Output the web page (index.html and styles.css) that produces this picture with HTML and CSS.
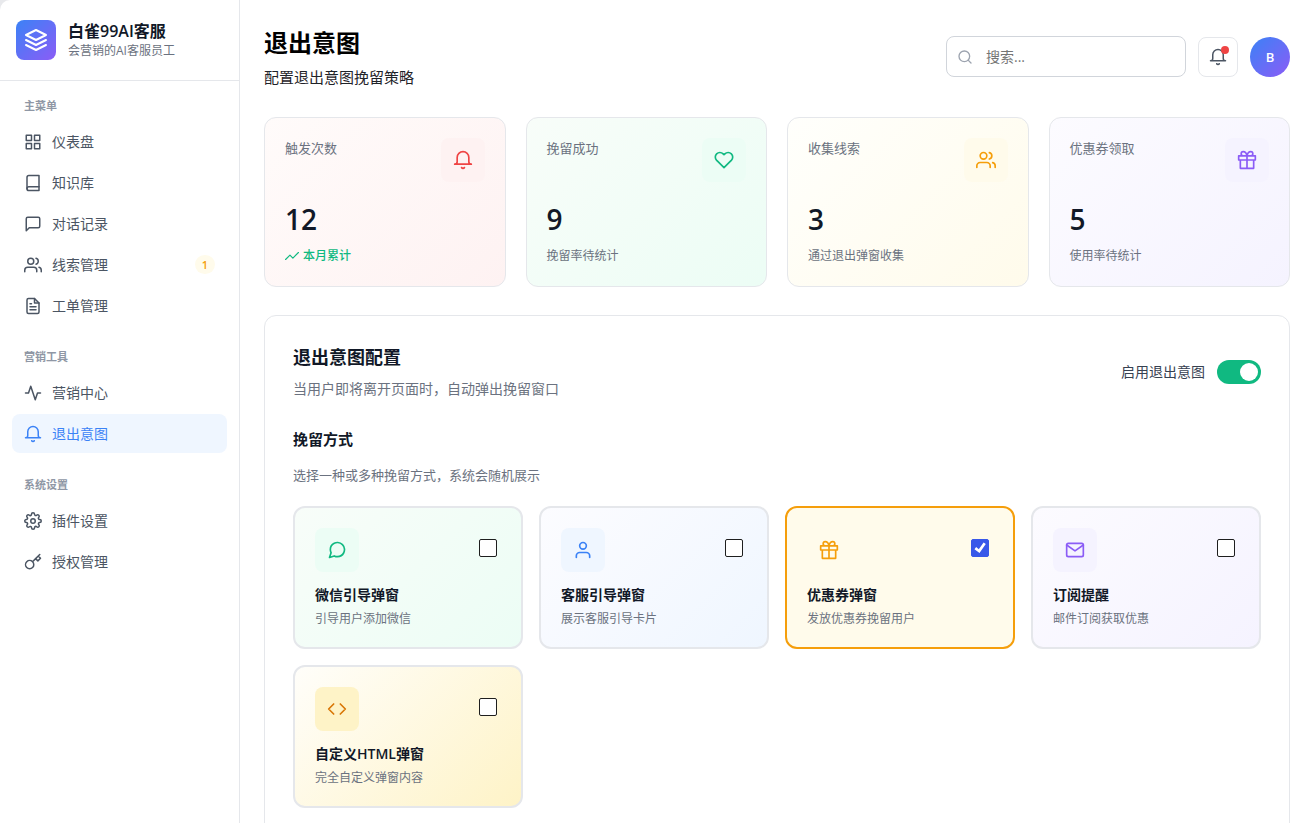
FILE: index.html
```html
<!DOCTYPE html>
<html lang="zh-CN">
<head>
<meta charset="utf-8">
<meta name="viewport" content="width=device-width, initial-scale=1">
<title>退出意图 - 白雀99AI客服</title>
<link rel="stylesheet" href="styles.css">
</head>
<body>
<svg class="sprite" aria-hidden="true">
  <symbol id="i-layers" viewBox="0 0 24 24"><path d="M12 2L2 7l10 5 10-5-10-5zM2 17l10 5 10-5M2 12l10 5 10-5"/></symbol>
  <symbol id="i-grid" viewBox="0 0 24 24"><rect x="3" y="3" width="7" height="7"/><rect x="14" y="3" width="7" height="7"/><rect x="14" y="14" width="7" height="7"/><rect x="3" y="14" width="7" height="7"/></symbol>
  <symbol id="i-book" viewBox="0 0 24 24"><path d="M4 19.500A2.500 2.500 0 0 1 6.500 17H20"/><path d="M6.500 2H20v20H6.500A2.500 2.500 0 0 1 4 19.500v-15A2.500 2.500 0 0 1 6.500 2z"/></symbol>
  <symbol id="i-message" viewBox="0 0 24 24"><path d="M21 15a2 2 0 0 1-2 2H7l-4 4V5a2 2 0 0 1 2-2h14a2 2 0 0 1 2 2z"/></symbol>
  <symbol id="i-users" viewBox="0 0 24 24"><path d="M17 21v-2a4 4 0 0 0-4-4H5a4 4 0 0 0-4 4v2"/><circle cx="9" cy="7" r="4"/><path d="M23 21v-2a4 4 0 0 0-3-3.870M16 3.130a4 4 0 0 1 0 7.750"/></symbol>
  <symbol id="i-file" viewBox="0 0 24 24"><path d="M14 2H6a2 2 0 0 0-2 2v16a2 2 0 0 0 2 2h12a2 2 0 0 0 2-2V8z"/><path d="M14 2v6h6M16 13H8M16 17H8M10 9H8"/></symbol>
  <symbol id="i-activity" viewBox="0 0 24 24"><path d="M22 12h-4l-3 9L9 3l-3 9H2"/></symbol>
  <symbol id="i-bell" viewBox="0 0 24 24"><path d="M22 17H2a3 3 0 0 0 3-3V9a7 7 0 0 1 14 0v5a3 3 0 0 0 3 3zM13.730 21a2 2 0 0 1-3.460 0"/></symbol>
  <symbol id="i-settings" viewBox="0 0 24 24"><circle cx="12" cy="12" r="3"/><path d="M19.400 15a1.650 1.650 0 0 0 .33 1.820l.06.06a2 2 0 0 1 0 2.830 2 2 0 0 1-2.830 0l-.06-.06a1.650 1.650 0 0 0-1.820-.33 1.650 1.650 0 0 0-1 1.510V21a2 2 0 0 1-2 2 2 2 0 0 1-2-2v-.09A1.650 1.650 0 0 0 9 19.400a1.650 1.650 0 0 0-1.820.33l-.06.06a2 2 0 0 1-2.830 0 2 2 0 0 1 0-2.830l.06-.06a1.650 1.650 0 0 0 .33-1.820 1.650 1.650 0 0 0-1.510-1H3a2 2 0 0 1-2-2 2 2 0 0 1 2-2h.09A1.650 1.650 0 0 0 4.600 9a1.650 1.650 0 0 0-.33-1.820l-.06-.06a2 2 0 0 1 0-2.830 2 2 0 0 1 2.830 0l.06.06a1.650 1.650 0 0 0 1.820.33H9a1.650 1.650 0 0 0 1-1.510V3a2 2 0 0 1 2-2 2 2 0 0 1 2 2v.09a1.650 1.650 0 0 0 1 1.510 1.650 1.650 0 0 0 1.820-.33l.06-.06a2 2 0 0 1 2.830 0 2 2 0 0 1 0 2.830l-.06.06a1.650 1.650 0 0 0-.33 1.820V9a1.650 1.650 0 0 0 1.510 1H21a2 2 0 0 1 2 2 2 2 0 0 1-2 2h-.09a1.650 1.650 0 0 0-1.510 1z"/></symbol>
  <symbol id="i-key" viewBox="0 0 24 24"><path d="M21 2l-2 2m-7.610 7.610a5.500 5.500 0 1 1-7.778 7.778 5.500 5.500 0 0 1 7.777-7.777zm0 0L15.500 7.500m0 0l3 3L22 7l-3-3m-3.500 3.500L19 4"/></symbol>
  <symbol id="i-search" viewBox="0 0 24 24"><circle cx="11" cy="11" r="8"/><path d="M21 21l-4.350-4.350"/></symbol>
  <symbol id="i-heart" viewBox="0 0 24 24"><path d="M20.840 4.610a5.500 5.500 0 0 0-7.780 0L12 5.670l-1.060-1.060a5.500 5.500 0 0 0-7.780 7.780l1.060 1.060L12 21.230l7.780-7.780 1.060-1.060a5.500 5.500 0 0 0 0-7.780z"/></symbol>
  <symbol id="i-gift" viewBox="0 0 24 24"><path d="M20 12v10H4V12M2 7h20v5H2zM12 22V7M12 7H7.500a2.500 2.500 0 0 1 0-5C11 2 12 7 12 7zM12 7h4.500a2.500 2.500 0 0 0 0-5C13 2 12 7 12 7z"/></symbol>
  <symbol id="i-trend" viewBox="0 0 24 24"><path d="M23 6l-9.500 9.500-5-5L1 18"/></symbol>
  <symbol id="i-chat" viewBox="0 0 24 24"><path d="M21 11.500a8.380 8.380 0 0 1-.9 3.800 8.500 8.500 0 0 1-7.600 4.700 8.380 8.380 0 0 1-3.800-.9L3 21l1.900-5.700a8.380 8.380 0 0 1-.9-3.800 8.500 8.500 0 0 1 4.700-7.600 8.380 8.380 0 0 1 3.800-.9h.5a8.480 8.480 0 0 1 8 8v.5z"/></symbol>
  <symbol id="i-user" viewBox="0 0 24 24"><path d="M20 21v-2a4 4 0 0 0-4-4H8a4 4 0 0 0-4 4v2"/><circle cx="12" cy="7" r="4"/></symbol>
  <symbol id="i-mail" viewBox="0 0 24 24"><path d="M4 4h16a2 2 0 0 1 2 2v12a2 2 0 0 1-2 2H4a2 2 0 0 1-2-2V6a2 2 0 0 1 2-2z"/><path d="M22 6l-10 7L2 6"/></symbol>
  <symbol id="i-code" viewBox="0 0 24 24"><path d="M16 18l6-6-6-6M8 6l-6 6 6 6"/></symbol>
</svg>

<div class="app">
  <aside class="sidebar">
    <div class="brand">
      <div class="brand-logo"><svg class="icon icon-lg"><use href="#i-layers"/></svg></div>
      <div>
        <div class="brand-name">白雀99AI客服</div>
        <div class="brand-tagline">会营销的AI客服员工</div>
      </div>
    </div>
    <nav class="nav">
      <section class="nav-section">
        <h2 class="nav-label">主菜单</h2>
        <div class="nav-list">
          <a class="nav-item" href="#dashboard"><svg class="icon icon-sm"><use href="#i-grid"/></svg>仪表盘</a>
          <a class="nav-item" href="#knowledge"><svg class="icon icon-sm"><use href="#i-book"/></svg>知识库</a>
          <a class="nav-item" href="#chats"><svg class="icon icon-sm"><use href="#i-message"/></svg>对话记录</a>
          <a class="nav-item" href="#leads"><svg class="icon icon-sm"><use href="#i-users"/></svg>线索管理<span class="nav-badge">1</span></a>
          <a class="nav-item" href="#tickets"><svg class="icon icon-sm"><use href="#i-file"/></svg>工单管理</a>
        </div>
      </section>
      <section class="nav-section">
        <h2 class="nav-label">营销工具</h2>
        <div class="nav-list">
          <a class="nav-item" href="#marketing"><svg class="icon icon-sm"><use href="#i-activity"/></svg>营销中心</a>
          <a class="nav-item active" href="#exit" aria-current="page"><svg class="icon icon-sm"><use href="#i-bell"/></svg>退出意图</a>
        </div>
      </section>
      <section class="nav-section">
        <h2 class="nav-label">系统设置</h2>
        <div class="nav-list">
          <a class="nav-item" href="#settings"><svg class="icon icon-sm"><use href="#i-settings"/></svg>插件设置</a>
          <a class="nav-item" href="#license"><svg class="icon icon-sm"><use href="#i-key"/></svg>授权管理</a>
        </div>
      </section>
    </nav>
  </aside>

  <main class="main">
    <header class="page-header">
      <div>
        <h1 class="page-title">退出意图</h1>
        <p class="page-subtitle">配置退出意图挽留策略</p>
      </div>
      <div class="actions">
        <label class="search">
          <svg class="icon icon-xs"><use href="#i-search"/></svg>
          <input class="search-input" type="text" placeholder="搜索..." aria-label="搜索">
        </label>
        <button class="bell-button" type="button" aria-label="通知"><svg class="icon icon-sm"><use href="#i-bell"/></svg><span class="bell-dot"></span></button>
        <button class="avatar" type="button">B</button>
      </div>
    </header>

    <div class="stats">
      <article class="stat red">
        <div class="stat-top"><span class="stat-label">触发次数</span><span class="tile"><svg class="icon"><use href="#i-bell"/></svg></span></div>
        <div class="stat-value">12</div>
        <div class="stat-note up"><svg class="icon icon-trend"><use href="#i-trend"/></svg>本月累计</div>
      </article>
      <article class="stat green">
        <div class="stat-top"><span class="stat-label">挽留成功</span><span class="tile"><svg class="icon"><use href="#i-heart"/></svg></span></div>
        <div class="stat-value">9</div>
        <div class="stat-note">挽留率待统计</div>
      </article>
      <article class="stat amber">
        <div class="stat-top"><span class="stat-label">收集线索</span><span class="tile"><svg class="icon"><use href="#i-users"/></svg></span></div>
        <div class="stat-value">3</div>
        <div class="stat-note">通过退出弹窗收集</div>
      </article>
      <article class="stat violet">
        <div class="stat-top"><span class="stat-label">优惠券领取</span><span class="tile"><svg class="icon"><use href="#i-gift"/></svg></span></div>
        <div class="stat-value">5</div>
        <div class="stat-note">使用率待统计</div>
      </article>
    </div>

    <section class="panel">
      <div class="panel-head">
        <div>
          <h2 class="panel-title">退出意图配置</h2>
          <p class="panel-desc">当用户即将离开页面时，自动弹出挽留窗口</p>
        </div>
        <label class="toggle">启用退出意图<input class="switch" type="checkbox" role="switch" checked></label>
      </div>
      <h3 class="group-title">挽留方式</h3>
      <p class="group-desc">选择一种或多种挽留方式，系统会随机展示</p>
      <div class="options">
        <label class="option green">
          <span class="option-top"><span class="tile"><svg class="icon"><use href="#i-chat"/></svg></span><input class="check" type="checkbox"></span>
          <span class="option-title">微信引导弹窗</span>
          <span class="option-desc">引导用户添加微信</span>
        </label>
        <label class="option blue">
          <span class="option-top"><span class="tile"><svg class="icon"><use href="#i-user"/></svg></span><input class="check" type="checkbox"></span>
          <span class="option-title">客服引导弹窗</span>
          <span class="option-desc">展示客服引导卡片</span>
        </label>
        <label class="option amber selected">
          <span class="option-top"><span class="tile"><svg class="icon"><use href="#i-gift"/></svg></span><input class="check" type="checkbox" checked></span>
          <span class="option-title">优惠券弹窗</span>
          <span class="option-desc">发放优惠券挽留用户</span>
        </label>
        <label class="option violet">
          <span class="option-top"><span class="tile"><svg class="icon"><use href="#i-mail"/></svg></span><input class="check" type="checkbox"></span>
          <span class="option-title">订阅提醒</span>
          <span class="option-desc">邮件订阅获取优惠</span>
        </label>
        <label class="option gold">
          <span class="option-top"><span class="tile"><svg class="icon"><use href="#i-code"/></svg></span><input class="check" type="checkbox"></span>
          <span class="option-title">自定义HTML弹窗</span>
          <span class="option-desc">完全自定义弹窗内容</span>
        </label>
      </div>
    </section>
  </main>
</div>
</body>
</html>
```
FILE: styles.css
```css
* {
  box-sizing: border-box;
}

html {
  background: #e8e9ec;
}

body {
  margin: 0;
  font-family: "Open Sans", "Noto Sans CJK SC", sans-serif;
  font-size: 14px;
  line-height: 22px;
  color: #111827;
}

h1, h2, h3, p {
  margin: 0;
}

button, input {
  font: inherit;
}

.sprite {
  display: none;
}

.icon {
  display: block;
  flex: none;
  width: 20px;
  height: 20px;
  fill: none;
  stroke: currentColor;
  stroke-width: 2;
  stroke-linecap: round;
  stroke-linejoin: round;
}

.icon-lg {
  width: 24px;
  height: 24px;
}

.icon-sm {
  width: 18px;
  height: 18px;
}

.icon-xs {
  width: 16px;
  height: 16px;
}

.icon-trend {
  width: 14px;
  height: 14px;
}

.app {
  display: flex;
  height: 100vh;
  overflow: hidden;
  background: #fff;
  border-top-left-radius: 10px;
}

/* Sidebar */
.sidebar {
  flex: none;
  width: 240px;
  border-right: 1px solid #e5e7eb;
}

.brand {
  display: flex;
  align-items: center;
  gap: 12px;
  padding: 20px 16px;
  border-bottom: 1px solid #e5e7eb;
}

.brand-logo {
  display: grid;
  place-items: center;
  width: 40px;
  height: 40px;
  border-radius: 8px;
  color: #fff;
  background: linear-gradient(135deg, #3b82f6, #8b5cf6);
}

.brand-name {
  font-size: 16px;
  line-height: 22px;
  font-weight: 600;
}

.brand-tagline {
  font-size: 12px;
  line-height: 18px;
  color: #6b7280;
}

.nav {
  display: flex;
  flex-direction: column;
  gap: 15px;
  padding: 8px 12px;
}

.nav-label {
  padding: 8px 12px;
  font-size: 11px;
  line-height: 17px;
  font-weight: 600;
  color: #8f97a5;
}

.nav-list {
  display: flex;
  flex-direction: column;
  gap: 2px;
}

.nav-item {
  display: flex;
  align-items: center;
  gap: 10px;
  height: 39px;
  padding: 0 12px;
  border-radius: 8px;
  color: #4b5563;
  text-decoration: none;
}

.nav-item.active {
  color: #3b82f6;
  background: #eff6ff;
}

.nav-badge {
  margin-left: auto;
  padding: 0 7px;
  border-radius: 10px;
  font-size: 11px;
  line-height: 19px;
  font-weight: 600;
  color: #f59e0b;
  background: #fffbeb;
}

/* Main column */
.main {
  flex: 1;
  min-width: 0;
  padding: 24px 21px 0 24px;
}

.page-header {
  display: flex;
  align-items: center;
  justify-content: space-between;
  margin-bottom: 28px;
}

.page-title {
  margin-bottom: 3px;
  font-size: 24px;
  line-height: 38px;
  font-weight: 700;
  color: #000;
}

.page-subtitle {
  font-size: 15px;
  line-height: 24px;
  color: #1f2329;
}

.actions {
  display: flex;
  align-items: center;
  gap: 12px;
}

.search {
  display: flex;
  align-items: center;
  gap: 13px;
  width: 240px;
  height: 41px;
  padding: 0 10px;
  border: 1px solid #d1d5db;
  border-radius: 8px;
  color: #9ca3af;
}

.search-input {
  flex: 1;
  min-width: 0;
  padding: 0;
  border: 0;
  outline: 0;
  background: none;
  color: #111827;
}

.search-input::placeholder {
  color: #757575;
}

.bell-button {
  position: relative;
  display: grid;
  place-items: center;
  width: 40px;
  height: 40px;
  padding: 0;
  border: 1px solid #e5e7eb;
  border-radius: 8px;
  color: #4b5563;
  background: #fff;
}

.bell-dot {
  position: absolute;
  top: 8px;
  right: 8px;
  width: 8px;
  height: 8px;
  border-radius: 50%;
  background: #ef4444;
}

.avatar {
  width: 40px;
  height: 40px;
  padding: 0;
  border: 0;
  border-radius: 50%;
  font-size: 13px;
  font-weight: 600;
  color: #fff;
  background: linear-gradient(135deg, #3b82f6, #8b5cf6);
}

/* Colour themes shared by stat and option cards */
.red {
  --tone: #ef4444;
  --tint: #fef2f2;
  --start: #fffbfa;
}

.green {
  --tone: #10b981;
  --tint: #ecfdf5;
  --start: #f8fdf9;
}

.amber {
  --tone: #f59e0b;
  --tint: #fffbeb;
  --start: #fffffc;
}

.violet {
  --tone: #8b5cf6;
  --tint: #f5f3ff;
  --start: #fcfbff;
}

.blue {
  --tone: #3b82f6;
  --tint: #eff6ff;
  --start: #fcfcff;
}

.gold {
  --tone: #d97706;
  --tint: #fef3c7;
  --start: #fffefa;
}

.tile {
  display: grid;
  place-items: center;
  width: 44px;
  height: 44px;
  border-radius: 8px;
  color: var(--tone);
  background: var(--tint);
}

.stats {
  display: grid;
  grid-template-columns: repeat(4, 1fr);
  gap: 20px;
  margin-bottom: 28px;
}

.stat {
  padding: 20px;
  border: 1px solid #e5e7eb;
  border-radius: 12px;
  background: linear-gradient(135deg, var(--start), var(--tint));
}

.stat-top {
  display: flex;
  align-items: flex-start;
  justify-content: space-between;
  margin-bottom: 20px;
}

.stat-label {
  font-size: 13px;
  line-height: 20px;
  color: #6b7280;
}

.stat-value {
  margin-bottom: 10px;
  font-size: 28px;
  line-height: 34px;
  font-weight: 600;
}

.stat-note {
  display: flex;
  align-items: center;
  gap: 4px;
  font-size: 12px;
  line-height: 20px;
  color: #6b7280;
}

.stat-note.up {
  font-weight: 500;
  color: #10b981;
}

/* Configuration panel */
.panel {
  padding: 28px;
  border: 1px solid #e5e7eb;
  border-radius: 12px;
}

.panel-head {
  display: flex;
  align-items: center;
  justify-content: space-between;
  margin-bottom: 27px;
}

.panel-title {
  margin-bottom: 7px;
  font-size: 18px;
  line-height: 27px;
  font-weight: 700;
}

.panel-desc {
  color: #6b7280;
}

.toggle {
  display: flex;
  align-items: center;
  gap: 12px;
  color: #374151;
}

.switch {
  appearance: none;
  display: flex;
  align-items: center;
  justify-content: flex-start;
  width: 44px;
  height: 24px;
  margin: 0;
  padding: 0 3px;
  border-radius: 12px;
  background: #d1d5db;
}

.switch::before {
  content: "";
  width: 18px;
  height: 18px;
  border-radius: 50%;
  background: #fff;
}

.switch:checked {
  justify-content: flex-end;
  background: #10b981;
}

.group-title {
  margin-bottom: 14px;
  font-size: 15px;
  line-height: 24px;
  font-weight: 600;
}

.group-desc {
  margin-bottom: 21px;
  font-size: 13px;
  line-height: 20px;
  color: #6b7280;
}

.options {
  display: grid;
  grid-template-columns: repeat(4, 1fr);
  gap: 16px;
}

.option {
  display: flex;
  flex-direction: column;
  padding: 20px;
  border: 2px solid #e5e7eb;
  border-radius: 12px;
  background: linear-gradient(135deg, var(--start), var(--tint));
}

.option.selected {
  border-color: #f59e0b;
  background: #fffbeb;
}

.option-top {
  display: flex;
  align-items: flex-start;
  justify-content: space-between;
  margin-bottom: 12px;
}

.option-title {
  margin-bottom: 4px;
  font-weight: 600;
}

.option-desc {
  font-size: 12px;
  line-height: 17px;
  color: #6b7280;
}

.check {
  appearance: none;
  display: grid;
  place-items: center;
  width: 18px;
  height: 18px;
  margin: 11px 4px 0 0;
  border: 1px solid #1e1e1e;
  border-radius: 2px;
  background: #fff;
}

.check:checked {
  border-color: #3858e9;
  background: #3858e9;
}

.check:checked::before {
  content: "";
  width: 12px;
  height: 12px;
  background: #fff;
  clip-path: polygon(80% 4%, 98% 16%, 46% 92%, 4% 60%, 18% 42%, 40% 60%);
}
```
